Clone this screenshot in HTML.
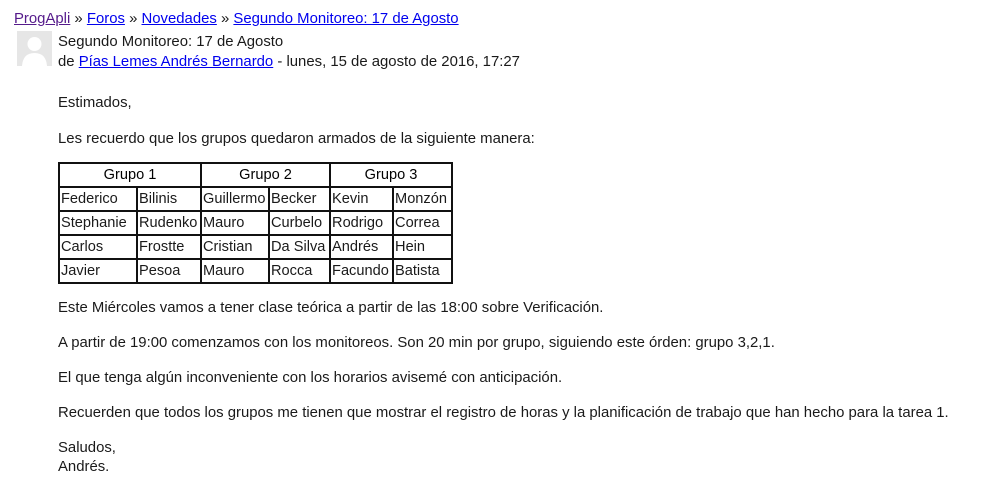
<!DOCTYPE html>
<html><head><meta charset="utf-8"><style>
body{margin:0;width:1007px;height:482px;background:#fff;font-family:"Liberation Sans",sans-serif;font-size:14.9px;color:#1a1a1a;position:relative;overflow:hidden}
.t{position:absolute;white-space:nowrap;line-height:18px}
a{color:#0000ee;text-decoration:underline}
a.v{color:#551a8b}
table{position:absolute;left:58px;top:162px;border-collapse:collapse;font-size:14.6px;table-layout:fixed;width:393px}
td,th{border:2px solid #111;padding:0 1px;height:22px;line-height:22px;text-align:left;font-weight:normal;white-space:nowrap;overflow:hidden}
th{text-align:center;color:#000}
</style></head><body>
<div class="t" style="left:14px;top:10px"><a class="v" href="#">ProgApli</a> » <a href="#">Foros</a> » <a href="#">Novedades</a> » <a href="#">Segundo Monitoreo: 17 de Agosto</a></div>
<div style="position:absolute;left:17px;top:31px;width:35px;height:35px;background:#e6e6e6"></div>
<svg style="position:absolute;left:17px;top:31px" width="35" height="35"><circle cx="17.5" cy="13" r="7" fill="#fff"/><path d="M5 35 Q6 22 17.5 22 Q29 22 30 35Z" fill="#fff"/></svg>
<div class="t" style="left:58px;top:33px">Segundo Monitoreo: 17 de Agosto</div>
<div class="t" style="left:58px;top:53px">de <a href="#">Pías Lemes Andrés Bernardo</a> - lunes, 15 de agosto de 2016, 17:27</div>
<div class="t" style="left:58px;top:94px">Estimados,</div>
<div class="t" style="left:58px;top:130px">Les recuerdo que los grupos quedaron armados de la siguiente manera:</div>
<table>
<colgroup><col style="width:78px"><col style="width:64px"><col style="width:68px"><col style="width:61px"><col style="width:63px"><col style="width:59px"></colgroup>
<tr><th colspan="2">Grupo 1</th><th colspan="2">Grupo 2</th><th colspan="2">Grupo 3</th></tr>
<tr><td>Federico</td><td>Bilinis</td><td>Guillermo</td><td>Becker</td><td>Kevin</td><td>Monzón</td></tr>
<tr><td>Stephanie</td><td>Rudenko</td><td>Mauro</td><td>Curbelo</td><td>Rodrigo</td><td>Correa</td></tr>
<tr><td>Carlos</td><td>Frostte</td><td>Cristian</td><td>Da Silva</td><td>Andrés</td><td>Hein</td></tr>
<tr><td>Javier</td><td>Pesoa</td><td>Mauro</td><td>Rocca</td><td>Facundo</td><td>Batista</td></tr>
</table>
<div class="t" style="left:58px;top:299px">Este Miércoles vamos a tener clase teórica a partir de las 18:00 sobre Verificación.</div>
<div class="t" style="left:58px;top:334px">A partir de 19:00 comenzamos con los monitoreos. Son 20 min por grupo, siguiendo este órden: grupo 3,2,1.</div>
<div class="t" style="left:58px;top:369px">El que tenga algún inconveniente con los horarios avisemé con anticipación.</div>
<div class="t" style="left:58px;top:404px">Recuerden que todos los grupos me tienen que mostrar el registro de horas y la planificación de trabajo que han hecho para la tarea 1.</div>
<div class="t" style="left:58px;top:439px">Saludos,</div>
<div class="t" style="left:58px;top:458px">Andrés.</div>
</body></html>
